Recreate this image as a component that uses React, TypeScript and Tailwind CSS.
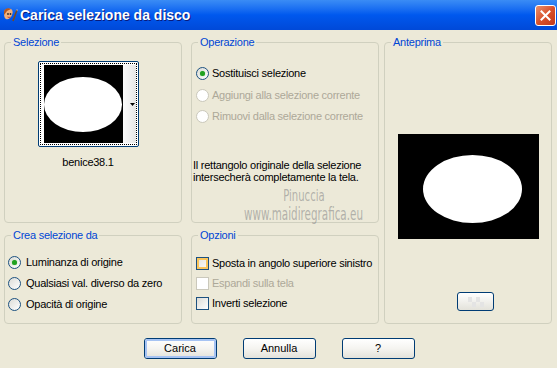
import React from 'react'

const font = { fontFamily: '"Liberation Sans", Arial, sans-serif' }

function Radio({ checked = false, disabled = false }: { checked?: boolean; disabled?: boolean }) {
  return (
    <span
      className={
        'w-[13px] h-[13px] rounded-full border flex items-center justify-center shrink-0 ' +
        (disabled ? 'border-[#cac8bb] bg-white' : 'border-[#1c5180] bg-linear-to-br from-[#dcdcd7] to-white')
      }
    >
      {checked && <span className="w-[5px] h-[5px] rounded-full bg-[#21a121] shadow-[0_0_1px_#5fd35f]" />}
    </span>
  )
}

function Check({ hover = false, disabled = false }: { hover?: boolean; disabled?: boolean }) {
  if (disabled) return <span className="w-[13px] h-[13px] border border-[#cac8bb] bg-white shrink-0" />
  return (
    <span className="w-[13px] h-[13px] border border-[#1c5180] shrink-0 flex">
      <span
        className={
          'flex-1 ' +
          (hover
            ? 'border-2 border-[#fbc55a] bg-linear-to-br from-[#e8e7e0] to-[#f8f7f3]'
            : 'bg-linear-to-br from-[#dcdcd7] to-white')
        }
      />
    </span>
  )
}

function Group({ title, className, children }: { title: string; className: string; children?: React.ReactNode }) {
  return (
    <fieldset className={'border border-[#d0d0bf] rounded-[4px] min-w-0 ' + className}>
      <legend className="ml-[6px] px-[2px] text-[11px] leading-[13px] text-[#0046d5]">{title}</legend>
      {children}
    </fieldset>
  )
}

function Button({ label, isDefault = false }: { label: string; isDefault?: boolean }) {
  return (
    <button className="w-[73px] h-[21px] rounded-[3px] border border-[#003c74] bg-linear-to-b from-white via-[#f5f4f0] to-[#e3e2da] flex p-0">
      <span
        className={
          'flex-1 flex items-center justify-center text-[11px] text-black rounded-[2px] ' +
          (isDefault ? 'border-2 border-[#a6c3f3]' : '')
        }
      >
        {label}
      </span>
    </button>
  )
}

function TitleIcon() {
  return (
    <svg width="16" height="16" viewBox="0 0 16 16" className="shrink-0">
      <path d="M2 5 C2 2 6 1 9 2 C11 3 11 6 10 8 C9 11 6 13 4 12 C2 11 2 8 2 5 Z" fill="#f2b07a" />
      <path d="M2 5 C2 2 6 0 9 2 C8 3 6 3 5 4 C4 5 3 7 2 8 Z" fill="#b5561e" />
      <circle cx="6" cy="7" r="0.9" fill="#2b2b2b" />
      <circle cx="8.5" cy="7" r="0.9" fill="#2b2b2b" />
      <path d="M5.5 10 Q7 11 8.5 10" stroke="#c0392b" strokeWidth="0.9" fill="none" />
      <path d="M11 14 L15 3" stroke="#7a4a20" strokeWidth="1.6" />
      <path d="M14.4 2.2 L15.8 2.8 L15 4.3 Z" fill="#d8d8d8" />
    </svg>
  )
}

export default function App() {
  return (
    <div className="w-[557px] h-[368px] bg-[#ece9d8] relative overflow-hidden" style={font}>
      {/* title bar */}
      <div className="h-[30px] flex items-center bg-linear-to-b from-[#3a8cf5] via-[#0058ee] to-[#0049d8] pl-[2px]">
        <TitleIcon />
        <span className="ml-[2px] text-white font-bold text-[14px] [text-shadow:1px_1px_#0a1a7a]">
          Carica selezione da disco
        </span>
        <span className="ml-auto mr-[1px] w-[21px] h-[21px] rounded-[3px] border border-white bg-linear-to-br from-[#e8906c] via-[#d9512b] to-[#c2381a] flex items-center justify-center">
          <svg width="11" height="11" viewBox="0 0 11 11">
            <path d="M1.5 1.5 L9.5 9.5 M9.5 1.5 L1.5 9.5" stroke="white" strokeWidth="2" strokeLinecap="square" />
          </svg>
        </span>
      </div>

      {/* body */}
      <div className="flex pt-[6px] pl-[4px] tracking-[-0.25px]">
        <div className="w-[178px] flex flex-col gap-[6px]">
          <Group title="Selezione" className="h-[187px] flex flex-col items-center">
            <div className="flex flex-col items-center pr-[10px] pt-[12px]">
              <div className="w-[101px] h-[86px] rounded-[2px] border border-[#003c74] bg-white p-[1px]">
                <div className="w-full h-full border border-dotted border-black flex pl-[3px] py-[1px]">
                  <div className="w-[79px] h-full bg-black">
                    <svg width="79" height="78" viewBox="0 0 79 78">
                      <ellipse cx="39" cy="39.5" rx="39" ry="27.5" fill="white" />
                    </svg>
                  </div>
                  <div className="flex-1 bg-linear-to-r from-[#fbfbfb] to-[#e6e6e6] flex items-center justify-end pr-[1px]">
                    <svg width="5" height="3" viewBox="0 0 5 3">
                      <path d="M0 0 L5 0 L2.5 3 Z" fill="black" />
                    </svg>
                  </div>
                </div>
              </div>
              <div className="mt-[9px] text-[11px] leading-[13px] text-black">benice38.1</div>
            </div>
          </Group>
          <Group title="Crea selezione da" className="h-[95px]">
            <div className="mt-[9px] pl-[3px] flex flex-col text-[11px] text-black">
              <div className="h-[22px] flex items-center gap-[5px]">
                <Radio checked />
                <span>Luminanza di origine</span>
              </div>
              <div className="h-[21px] flex items-center gap-[5px]">
                <Radio />
                <span>Qualsiasi val. diverso da zero</span>
              </div>
              <div className="h-[20px] flex items-center gap-[5px]">
                <Radio />
                <span>Opacità di origine</span>
              </div>
            </div>
          </Group>
        </div>

        <div className="w-[188px] ml-[9px] flex flex-col gap-[6px]">
          <Group title="Operazione" className="h-[187px]">
            <div className="mt-[13px] pl-[4px] flex flex-col text-[11px]">
              <div className="h-[22px] flex items-center gap-[3px] text-black">
                <Radio checked />
                <span>Sostituisci selezione</span>
              </div>
              <div className="h-[22px] flex items-center gap-[3px] text-[#aca899]">
                <Radio disabled />
                <span>Aggiungi alla selezione corrente</span>
              </div>
              <div className="h-[20px] flex items-center gap-[3px] text-[#aca899]">
                <Radio disabled />
                <span>Rimuovi dalla selezione corrente</span>
              </div>
            </div>
            <p className="mt-[33px] pl-[1px] text-[11px] leading-[12px] text-black">
              Il rettangolo originale della selezione
              <br />
              intersecherà completamente la tela.
            </p>
          </Group>
          <Group title="Opzioni" className="h-[95px]">
            <div className="mt-[11px] pl-[4px] flex flex-col text-[11px] whitespace-nowrap">
              <div className="h-[20px] flex items-center gap-[3px] text-black">
                <Check hover />
                <span>Sposta in angolo superiore sinistro</span>
              </div>
              <div className="h-[20px] flex items-center gap-[3px] text-[#aca899]">
                <Check disabled />
                <span>Espandi sulla tela</span>
              </div>
              <div className="h-[20px] flex items-center gap-[3px] text-black">
                <Check />
                <span>Inverti selezione</span>
              </div>
            </div>
          </Group>
        </div>

        <div className="w-[168px] ml-[5px]">
          <Group title="Anteprima" className="h-[288px] flex flex-col items-center">
            <div className="w-full flex flex-col items-center">
              <div className="mt-[85px] w-[141px] h-[105px] bg-black">
                <svg width="141" height="105" viewBox="0 0 141 105">
                  <ellipse cx="74.5" cy="55" rx="49.5" ry="34" fill="white" />
                </svg>
              </div>
              <button className="mt-[53px] ml-[15px] w-[37px] h-[19px] rounded-[3px] border border-[#003c74] bg-linear-to-b from-white to-[#e3e2da] flex items-center justify-center p-0">
                <svg width="16" height="10" viewBox="0 0 16 10">
                  <rect x="0" y="0" width="4" height="5" fill="#e4e4e4" />
                  <rect x="8" y="0" width="4" height="5" fill="#e4e4e4" />
                  <rect x="4" y="5" width="4" height="5" fill="#e4e4e4" />
                  <rect x="12" y="5" width="4" height="5" fill="#e4e4e4" />
                </svg>
              </button>
            </div>
          </Group>
        </div>
      </div>

      {/* buttons */}
      <div className="mt-[14px] flex justify-center gap-[26px] pl-[1px]">
        <Button label="Carica" isDefault />
        <Button label="Annulla" />
        <Button label="?" />
      </div>

      {/* watermark */}
      <div
        className="absolute left-[246px] top-[186px] w-[116px] flex flex-col items-center text-[#8a8a8a]/60 pointer-events-none"
        style={{ fontFamily: '"DejaVu Sans Condensed", "DejaVu Sans", sans-serif' }}
      >
        <span className="text-[14px] leading-[18px] scale-x-[0.8] scale-y-[1.1]">Pinuccia</span>
        <span className="text-[16px] leading-[20px] scale-x-[0.72] scale-y-[1.1] whitespace-nowrap">
          www.maidiregrafica.eu
        </span>
      </div>
    </div>
  )
}
